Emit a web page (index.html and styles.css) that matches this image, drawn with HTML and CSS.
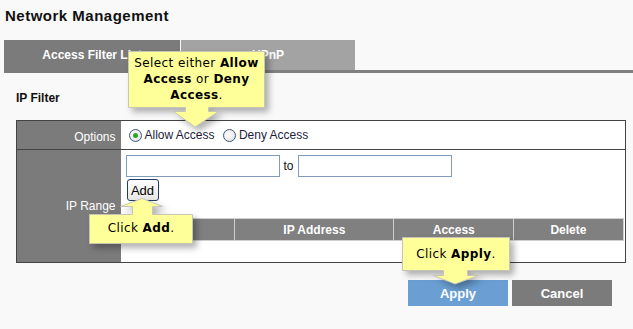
FILE: index.html
```html
<!DOCTYPE html>
<html lang="en">
<head>
    <meta charset="UTF-8">
    <title>Network Management</title>
    <link rel="stylesheet" href="styles.css">
</head>
<body>
    <div class="page">
        <h1>Network Management</h1>

        <div class="tabs">
            <div class="tab tab-active">Access Filter List</div>
            <div class="tab">UPnP</div>
        </div>

        <h2>IP Filter</h2>

        <table class="filter">
            <colgroup>
                <col class="col-label">
                <col>
            </colgroup>
            <tr class="row-options">
                <th>Options</th>
                <td>
                    <label class="radio"><span class="dot checked"></span>Allow Access</label>
                    <label class="radio"><span class="dot"></span>Deny Access</label>
                </td>
            </tr>
            <tr class="row-range">
                <th>IP Range</th>
                <td>
                    <div class="range">
                        <span class="field"></span>
                        <span class="to">to</span>
                        <span class="field"></span>
                    </div>
                    <button class="btn-add">Add</button>
                    <table class="list">
                        <tr>
                            <th class="c1">No.</th>
                            <th class="c2">IP Address</th>
                            <th class="c3">Access</th>
                            <th class="c4">Delete</th>
                        </tr>
                    </table>
                </td>
            </tr>
        </table>

        <div class="actions">
            <button class="btn btn-apply">Apply</button>
            <button class="btn btn-cancel">Cancel</button>
        </div>

        <!-- callouts -->
        <div class="callout callout-options">
            <svg width="138" height="77" viewBox="0 0 138 77">
                <path d="M0.5 0.5H136.5V56.5H80.5V60.5H90.5L67 76L45.5 60.5H57.5V56.5H0.5Z"/>
            </svg>
            <div class="callout-text" style="top:4px;width:137px">Select either <b>Allow Access</b> or <b>Deny Access</b>.</div>
        </div>

        <div class="callout callout-add">
            <svg width="105" height="47" viewBox="0 0 105 47">
                <path d="M0.5 16.5H43.5V8.5H31.5L53 0.5L73.5 8.5H63.5V16.5H103.5V45.5H0.5Z"/>
            </svg>
            <div class="callout-text" style="top:22px;width:104px">Click <b>Add</b>.</div>
        </div>

        <div class="callout callout-apply">
            <svg width="109" height="48" viewBox="0 0 109 48">
                <path d="M0.5 0.5H107.5V33.5H65.5V38.5H76.5L53 47L31.5 38.5H41.5V33.5H0.5Z"/>
            </svg>
            <div class="callout-text" style="top:9px;width:108px">Click <b>Apply</b>.</div>
        </div>
    </div>
</body>
</html>
```

FILE: styles.css
```css
body {
    margin: 0;
    background: #f9f9f9;
    font-family: "Liberation Sans", Arial, sans-serif;
    font-size: 12px;
    color: #000;
}
.page {
    position: relative;
    width: 633px;
    height: 329px;
    overflow: hidden;
}
h1 {
    margin: 0;
    padding: 7px 5px 0;
    height: 40px;
    box-sizing: border-box;
    font-size: 15px;
    font-weight: bold;
    letter-spacing: 0.5px;
    color: #111;
}
.tabs {
    display: flex;
    gap: 1px;
    margin-left: 4px;
    height: 30px;
    border-bottom: 3px solid #808080;
}
.tab {
    width: 174px;
    height: 30px;
    line-height: 30px;
    background: #a3a3a3;
    color: #fff;
    font-weight: bold;
    text-align: center;
}
.tab-active {
    width: 176px;
    height: 33px;
    background: #7b7b7b;
    line-height: 31px;
}
h2 {
    margin: 0;
    padding: 18px 0 0 16px;
    height: 47px;
    box-sizing: border-box;
    font-size: 12px;
    font-weight: bold;
    color: #111;
}
.filter {
    margin-left: 16px;
    width: 610px;
    table-layout: fixed;
    border-collapse: collapse;
    border: 1px solid #444;
}
.col-label {
    width: 104px;
}
.filter > tbody > tr > th {
    background: #7b7b7b;
    color: #fff;
    font-weight: normal;
    text-align: right;
    padding: 0 5px 0 0;
}
.filter > tbody > tr > td {
    background: #fff;
    padding: 0 4px 0 5px;
    vertical-align: top;
}
.row-options th,
.row-options td {
    height: 25px;
    padding-top: 3px !important;
    border-bottom: 1px solid #444;
}
.row-options td {
    vertical-align: middle !important;
    padding-left: 8px !important;
}
.radio {
    display: inline-flex;
    align-items: center;
    gap: 3px;
    margin-right: 5px;
    color: #1d1d3a;
}
.dot {
    width: 11px;
    height: 11px;
    border: 1px solid #3d5a76;
    border-radius: 50%;
    background: radial-gradient(circle at 40% 40%, #fff 0, #e6e6e6 70%, #cfcfcf 100%);
    position: relative;
}
.dot.checked::after {
    content: "";
    position: absolute;
    left: 3px;
    top: 3px;
    width: 5px;
    height: 5px;
    border-radius: 50%;
    background: #2aa52a;
}
.row-range th,
.row-range td {
    height: 112px;
}
.range {
    display: flex;
    align-items: center;
    gap: 4px;
    margin-top: 5px;
}
.field {
    display: block;
    width: 152px;
    height: 20px;
    border: 1px solid #7f9db9;
    background: #fff;
}
.to {
    color: #111;
}
.btn-add {
    display: block;
    margin: 2px 0 0 1px;
    width: 32px;
    height: 22px;
    padding: 0;
    border: 1px solid #1f3d6a;
    border-radius: 3px;
    background: linear-gradient(#fdfdfd, #e8e8e4);
    font-family: "Liberation Sans", Arial, sans-serif;
    font-size: 13px;
    color: #000;
}
.list {
    margin-top: 17px;
    width: 498px;
    border-collapse: collapse;
}
.list th {
    height: 21px;
    background: #808080;
    color: #fff;
    font-weight: bold;
    border: 1px solid #cfcfcf;
    padding: 0;
}
.list .c1 { width: 109px; }
.list .c2 { width: 159px; }
.list .c3 { width: 120px; }
.list .c4 { width: 109px; }
.actions {
    display: flex;
    justify-content: flex-end;
    gap: 4px;
    margin: 17px 21px 0 0;
}
.btn {
    width: 100px;
    height: 26px;
    border: none;
    padding: 0;
    color: #fff;
    font-family: "Liberation Sans", Arial, sans-serif;
    font-size: 13px;
    font-weight: bold;
}
.btn-apply {
    background: #6b9fd3;
}
.btn-cancel {
    background: #7b7b7b;
}
.callout {
    position: absolute;
}
.callout svg {
    display: block;
    filter: drop-shadow(4px 4px 3px rgba(0, 0, 0, 0.3));
}
.callout path {
    fill: #ffff99;
    stroke: #c6c6b4;
    stroke-width: 1;
}
.callout-text {
    position: absolute;
    left: 0;
    text-align: center;
    font-family: "DejaVu Sans", Verdana, sans-serif;
    font-size: 12px;
    line-height: 16px;
    letter-spacing: 0.4px;
    color: #000;
}
.callout-options {
    left: 128px;
    top: 51px;
}
.callout-add {
    left: 89px;
    top: 198px;
}
.callout-apply {
    left: 402px;
    top: 237px;
}
```
